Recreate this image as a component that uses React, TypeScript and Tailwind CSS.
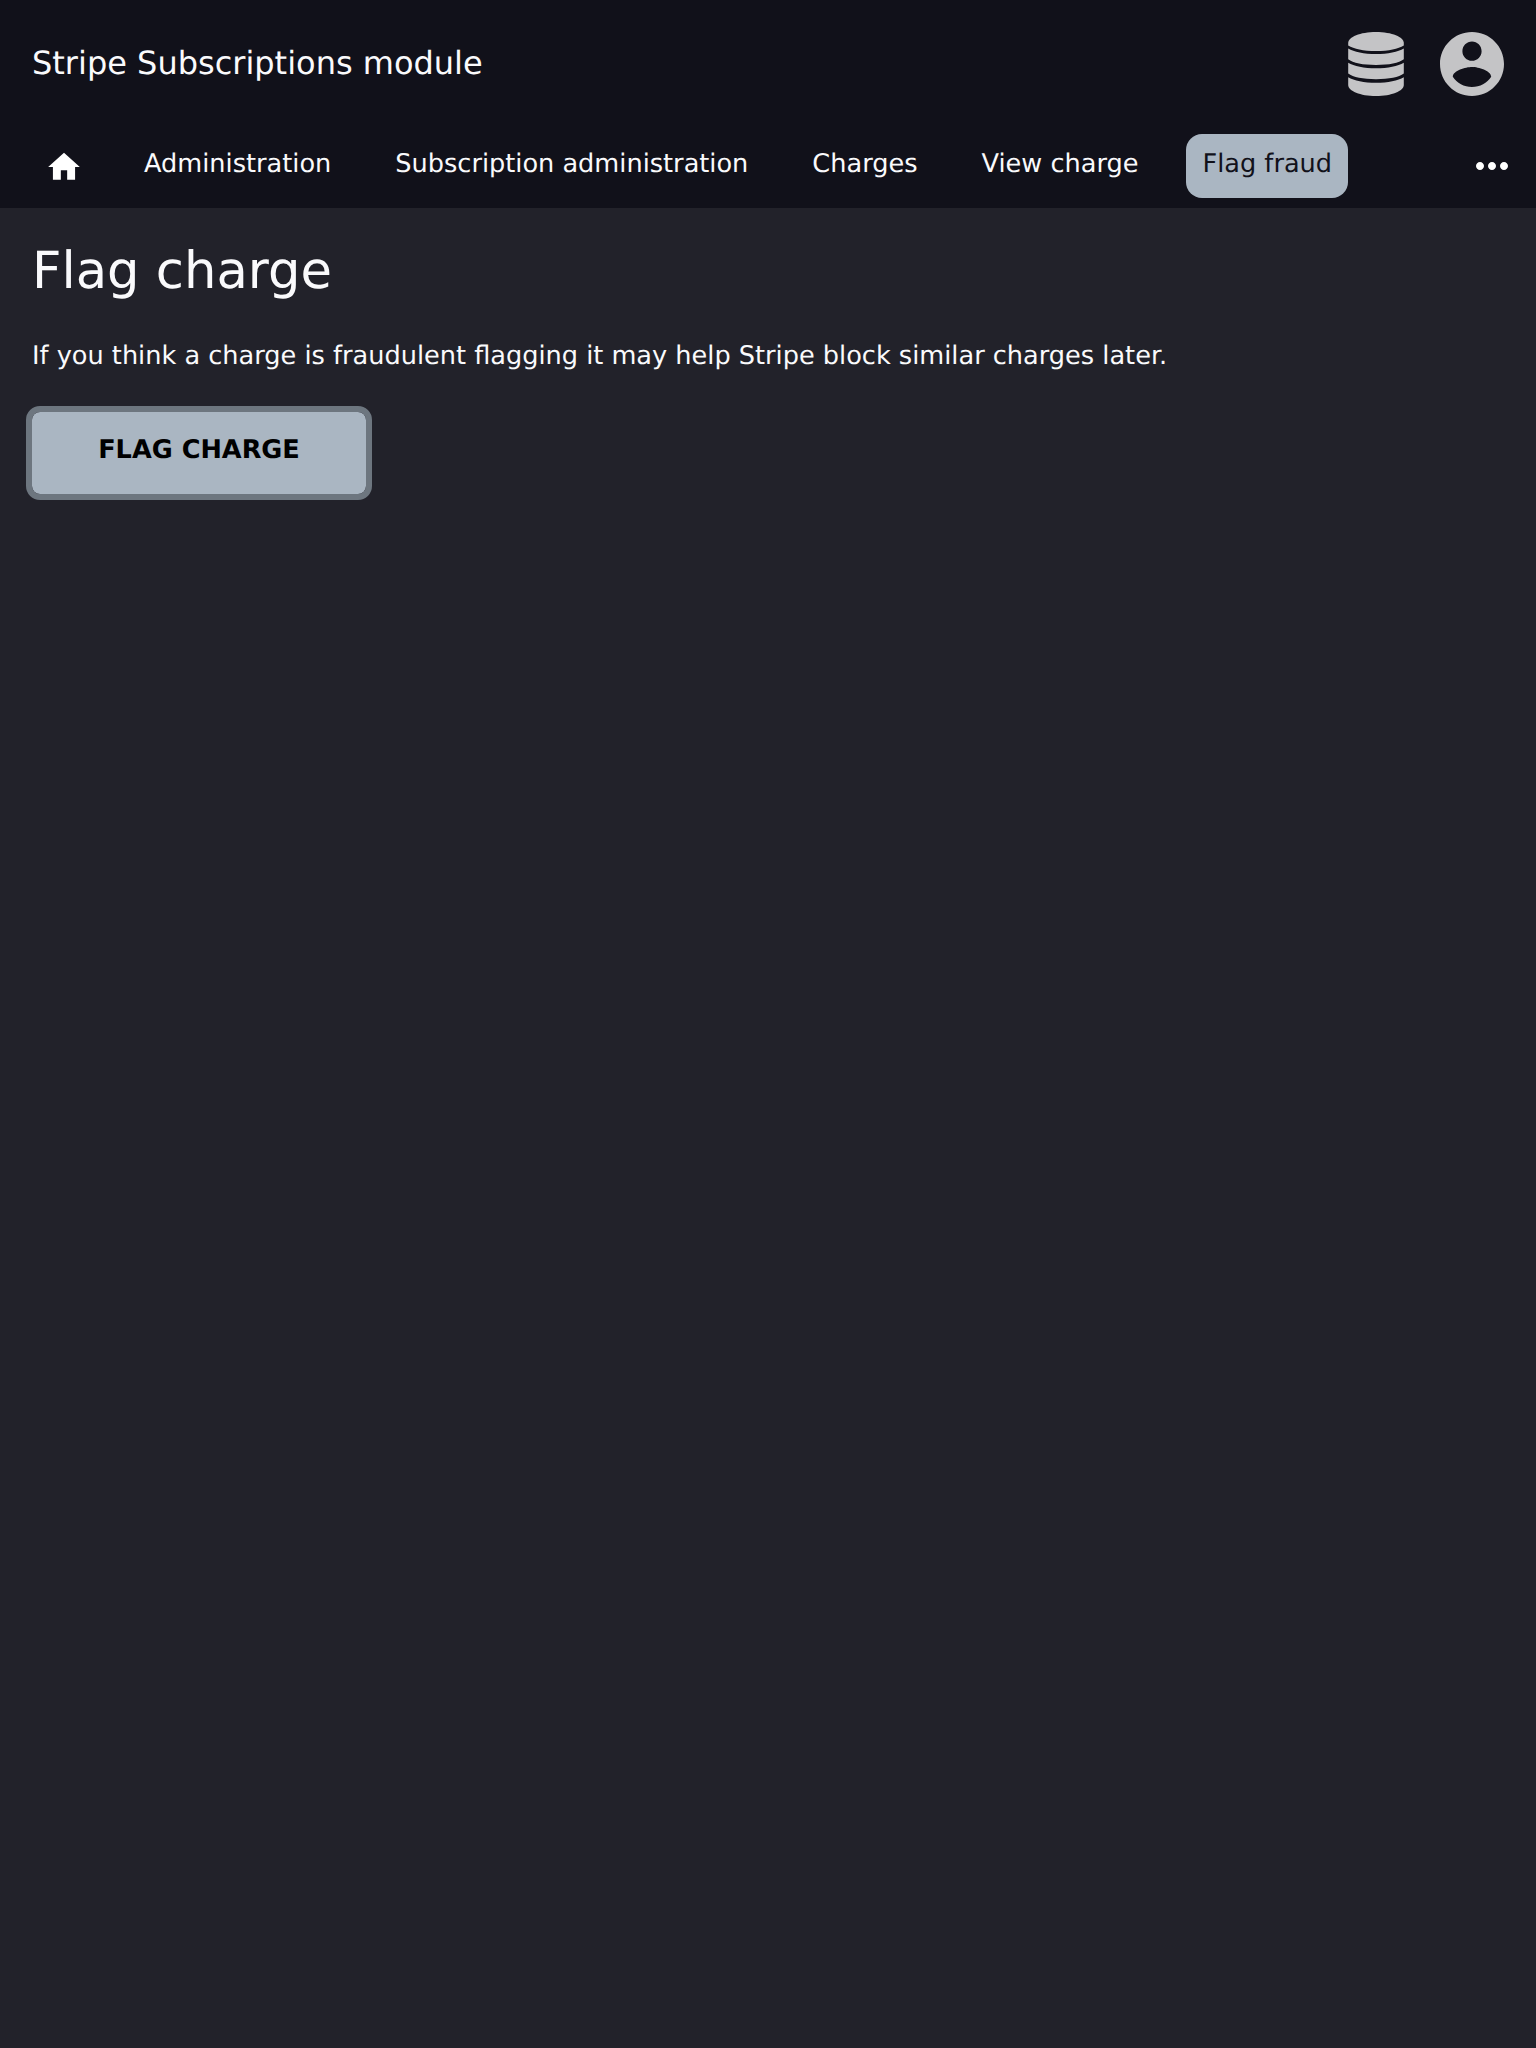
import React from "react";
import { MdHome, MdMoreHoriz } from "react-icons/md";

const links = ["Administration", "Subscription administration", "Charges", "View charge"];

function DatabaseIcon() {
  return (
    <svg viewBox="0 0 64 64" className="h-16 w-16" fill="currentColor">
      <path d="M4.200 11C4.200 5 16 0 32 0s27.800 5 27.800 11v2.500C54 17 45 19 32 19S10 17 4.200 13.500z" />
      <path d="M4.200 16.500C10 20 20 22 32 22s22-2 27.800-5.500v10.800C55 31 45 33 32 33S9 31 4.200 27.300z" />
      <path d="M4.200 30.800C10 34.300 20 36.300 32 36.300s22-2 27.800-5.500v10.800C55 45.300 45 47.300 32 47.300S9 45.300 4.200 41.600z" />
      <path d="M4.200 45.200C10 48.700 20 50.700 32 50.700s22-2 27.800-5.500V53c0 6-12 11-27.800 11S4.200 59 4.200 53z" />
    </svg>
  );
}

function AccountIcon() {
  return (
    <svg viewBox="2 2 20 20" className="h-16 w-16" fill="currentColor">
      <path d="M12 2C6.480 2 2 6.480 2 12s4.480 10 10 10 10-4.480 10-10S17.520 2 12 2zm0 3c1.660 0 3 1.340 3 3s-1.340 3-3 3-3-1.340-3-3 1.340-3 3-3zm0 14.200c-2.500 0-4.710-1.280-6-3.220.03-1.990 4-3.080 6-3.080 1.990 0 5.970 1.090 6 3.080-1.290 1.940-3.500 3.220-6 3.220z" />
    </svg>
  );
}

export default function App() {
  return (
    <div className="min-h-[2048px] bg-[#22222a] font-['DejaVu_Sans',sans-serif] text-[#fafafc] [text-rendering:geometricPrecision]">
      <header className="h-[208px] bg-[#11111a]">
        <div className="flex h-32 items-center justify-between px-8">
          <h1 className="pb-0.5 text-[32px] leading-[48px]">Stripe Subscriptions module</h1>
          <div className="flex items-center gap-8 text-[#c4c4c6]">
            <DatabaseIcon />
            <AccountIcon />
          </div>
        </div>
        <nav className="flex items-start pt-1.5 pl-8 text-[25.6px] leading-[60px]">
          <a className="flex h-16 w-16 items-center justify-center pt-0.5 text-white"><MdHome className="h-[38px] w-[38px]" /></a>
          <div className="flex grow gap-8 pl-8">
            {links.map((l) => <a key={l} className="h-16 px-4 whitespace-nowrap">{l}</a>)}
            <a className="h-16 rounded-2xl bg-[#aab6c2] px-4 whitespace-nowrap text-[#11111a]">Flag fraud</a>
          </div>
          <a className="flex h-16 w-[88px] items-center justify-center text-white"><MdMoreHoriz className="h-12 w-12" /></a>
        </nav>
      </header>
      <main className="px-8 pt-8">
        <h2 className="text-[51.2px] leading-[62px]">Flag charge</h2>
        <p className="mt-[35px] text-[25.6px] leading-[38px]">If you think a charge is fraudulent flagging it may help Stripe block similar charges later.</p>
        <button className="mt-[37px] h-[82px] w-[334px] rounded-lg bg-[#aab6c2] pb-1.5 text-[25.6px] font-bold text-black outline-[6.4px] outline-[#6d767f] [text-rendering:geometricPrecision]">FLAG CHARGE</button>
      </main>
    </div>
  );
}
